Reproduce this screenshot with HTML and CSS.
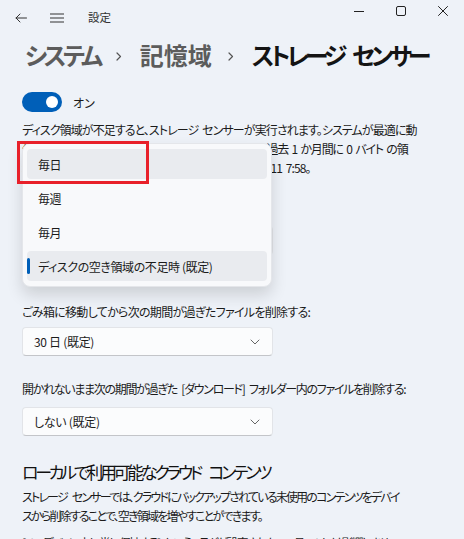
FILE: index.html
```html
<!DOCTYPE html>
<html lang="ja">
<head>
<meta charset="utf-8">
<title>設定</title>
<link rel="stylesheet" href="styles.css">
</head>
<body>
<div class="window">
  <header class="titlebar">
    <div class="tb-left">
      <svg class="tb-icon" width="12" height="10" viewBox="0 0 12 10" fill="none" stroke="#333" stroke-width="1" stroke-linecap="round" stroke-linejoin="round"><path d="M11.5 5H1M5 1L1 5l4 4"/></svg>
      <svg class="tb-icon menu-icon" width="14" height="10" viewBox="0 0 14 10" fill="none" stroke="#333" stroke-width="1"><path d="M0 1h14M0 5h14M0 9h14"/></svg>
      <span class="app-title">設定</span>
    </div>
    <div class="tb-controls">
      <span class="ctl"><svg width="10" height="10" viewBox="0 0 10 10" fill="none" stroke="#222" stroke-width="1"><path d="M0 5.5h10"/></svg></span>
      <span class="ctl"><svg width="10" height="10" viewBox="0 0 10 10" fill="none" stroke="#222" stroke-width="1"><rect x="0.5" y="0.5" width="9" height="9" rx="1.5"/></svg></span>
      <span class="ctl"><svg width="10" height="10" viewBox="0 0 10 10" fill="none" stroke="#222" stroke-width="1" stroke-linecap="round"><path d="M0.5 0.5l9 9M9.5 0.5l-9 9"/></svg></span>
    </div>
  </header>

  <main class="content">
    <h1 class="breadcrumb">
      <span class="crumb kana">システム</span>
      <svg class="chev" width="6" height="9" viewBox="0 0 6 9" fill="none" stroke="#555" stroke-width="1.2" stroke-linecap="round" stroke-linejoin="round"><path d="M1 1l3.5 3.5L1 8"/></svg>
      <span class="crumb">記憶域</span>
      <svg class="chev" width="6" height="9" viewBox="0 0 6 9" fill="none" stroke="#555" stroke-width="1.2" stroke-linecap="round" stroke-linejoin="round"><path d="M1 1l3.5 3.5L1 8"/></svg>
      <span class="crumb current">ストレージ センサー</span>
    </h1>

    <div class="toggle-row">
      <span class="toggle"><span class="knob"></span></span>
      <span class="toggle-label">オン</span>
    </div>

    <p class="desc top-desc">ディスク領域が不足すると、ストレージ センサーが実行されます。システムが最適に動<br><span class="tight">作するように、十分な空き領域をクリーンアップします。過去 1 か月間に 0 バイト の領</span><br>域をクリーンアップしました。最終実行日時: 2022/10/11 7:58。</p>

    <div class="run-section">
      <div class="label">ストレージ センサーを実行する:</div>
      <div class="combo"><span>ディスクの空き領域の不足時 (既定)</span></div>
      <div class="menu">
        <div class="item hover">毎日</div>
        <div class="item">毎週</div>
        <div class="item">毎月</div>
        <div class="item selected"><span class="indicator"></span>ディスクの空き領域の不足時 (既定)</div>
      </div>
      <div class="redbox"></div>
    </div>

    <div class="field">
      <div class="label label-1">ごみ箱に移動してから次の期間が過ぎたファイルを削除する:</div>
      <div class="combo"><span>30 日 (既定)</span><svg width="10" height="6" viewBox="0 0 10 6" fill="none" stroke="#666" stroke-width="1" stroke-linecap="round" stroke-linejoin="round"><path d="M1 1l4 4 4-4"/></svg></div>
    </div>

    <div class="field field-2">
      <div class="label label-2">開かれないまま次の期間が過ぎた [ダウンロード] フォルダー内のファイルを削除する:</div>
      <div class="combo"><span>しない (既定)</span><svg width="10" height="6" viewBox="0 0 10 6" fill="none" stroke="#666" stroke-width="1" stroke-linecap="round" stroke-linejoin="round"><path d="M1 1l4 4 4-4"/></svg></div>
    </div>

    <h2 class="section-title">ローカルで利用可能なクラウド コンテンツ</h2>
    <p class="desc cloud-desc">ストレージ センサーでは、クラウドにバックアップされている未使用のコンテンツをデバイ<br>スから削除することで、空き領域を増やすことができます。</p>
    <p class="desc cloud-desc">[このデバイス上に常に保持する] というフラグが設定されたコンテンツには影響しませ<br>ん。</p>
  </main>
</div>
</body>
</html>
```

FILE: styles.css
```css
* { box-sizing: border-box; }
html, body {
  margin: 0;
  padding: 0;
  background: #eef2f8;
}
body {
  font-family: "Noto Sans CJK JP", "Noto Sans", sans-serif;
  font-feature-settings: "palt";
  color: #1b1b1b;
  width: 464px;
  height: 539px;
  overflow: hidden;
}
.window {
  display: flex;
  flex-direction: column;
}
.titlebar {
  height: 36px;
  display: flex;
  justify-content: space-between;
  align-items: flex-start;
}
.tb-left {
  display: flex;
  align-items: center;
  height: 36px;
  padding-left: 15px;
}
.tb-icon { display: block; flex-shrink: 0; }
.menu-icon { margin-left: 23px; }
.app-title {
  margin-left: 24px;
  font-size: 11.5px;
  color: #333;
  line-height: 1;
}
.tb-controls {
  display: flex;
  height: 21px;
}
.ctl {
  width: 42px;
  height: 21px;
  display: flex;
  align-items: center;
  justify-content: center;
  padding-top: 1px;
}
.ctl svg { display: block; }

.content {
  padding: 0 0 0 22px;
  display: flex;
  flex-direction: column;
}
.breadcrumb {
  margin: 2px 0 0 3px;
  height: 34px;
  display: flex;
  align-items: center;
  font-size: 24px;
  font-weight: 600;
  color: #5c5c5c;
  white-space: nowrap;
  line-height: 1;
}
.crumb { flex-shrink: 0; }
.crumb.kana { letter-spacing: -3.4px; }
.chev { margin: 2px 18px 0 16px; display: block; flex-shrink: 0; }
.crumb.current {
  color: #141414;
  font-weight: 700;
  letter-spacing: -3.9px;
  word-spacing: 7px;
}

.toggle-row {
  margin-top: 20px;
  display: flex;
  align-items: center;
  height: 20px;
}
.toggle {
  width: 40px;
  height: 20px;
  border-radius: 10px;
  background: #005fb8;
  display: flex;
  align-items: center;
  justify-content: flex-end;
  padding-right: 4px;
}
.knob {
  width: 12px;
  height: 12px;
  border-radius: 50%;
  background: #fff;
}
.toggle-label {
  margin-left: 11px;
  font-size: 12px;
  color: #1b1b1b;
}

.desc {
  margin: 8px 0 0;
  font-size: 12px;
  letter-spacing: -0.5px;
  line-height: 19px;
  white-space: nowrap;
  color: #1b1b1b;
}
.top-desc { letter-spacing: -0.9px; word-spacing: 2px; }
.top-desc .tight { letter-spacing: -1.2px; }
.cloud-desc { letter-spacing: -1.8px; word-spacing: 4px; }

.run-section {
  position: relative;
  margin-top: 26px;
  height: 81px;
}
.run-section .combo { margin-top: 4px; }
.menu {
  position: absolute;
  left: 0;
  top: -60px;
  width: 250px;
  padding: 5px 4px;
  background: #f8f9fb;
  border-radius: 8px;
  border: 1px solid #e4e6ea;
  box-shadow: 0 8px 16px rgba(0, 0, 0, 0.14);
  z-index: 2;
  display: flex;
  flex-direction: column;
  gap: 4px;
}
.item {
  position: relative;
  height: 30px;
  padding-left: 11px;
  display: flex;
  align-items: center;
  font-size: 12px;
  letter-spacing: -0.4px;
  border-radius: 4px;
  color: #1b1b1b;
}
.item.hover, .item.selected { background: #e9ebef; }
.indicator {
  position: absolute;
  left: 0;
  top: 7px;
  width: 3px;
  height: 16px;
  border-radius: 2px;
  background: #005fb8;
}
.redbox {
  position: absolute;
  left: -5px;
  top: -62px;
  width: 132px;
  height: 43px;
  border: 3px solid #e8202a;
  z-index: 3;
}

.field { margin-top: 18px; }
.field-2 { margin-top: 23px; }
.field-2 .combo { margin-top: 9px; }
.label {
  font-size: 12px;
  letter-spacing: -0.5px;
  line-height: 19px;
  color: #1b1b1b;
  white-space: nowrap;
}
.label-1 { letter-spacing: -0.7px; }
.label-2 { letter-spacing: -1.3px; word-spacing: 3px; }
.combo {
  margin-top: 6px;
  width: 251px;
  height: 29px;
  background: #fbfcfd;
  border: 1px solid #e2e4e8;
  border-bottom-color: #c3c5c9;
  border-radius: 4px;
  display: flex;
  align-items: center;
  justify-content: space-between;
  padding: 0 12px 0 11px;
  font-size: 12px;
  letter-spacing: -0.3px;
  color: #1b1b1b;
}
.combo svg { display: block; flex-shrink: 0; }

.section-title {
  margin: 23px 0 0;
  font-size: 17px;
  font-weight: 400;
  letter-spacing: -3.3px;
  word-spacing: 8px;
  line-height: 26px;
  color: #111;
  white-space: nowrap;
}
.section-title + .desc { margin-top: 2px; }
```
